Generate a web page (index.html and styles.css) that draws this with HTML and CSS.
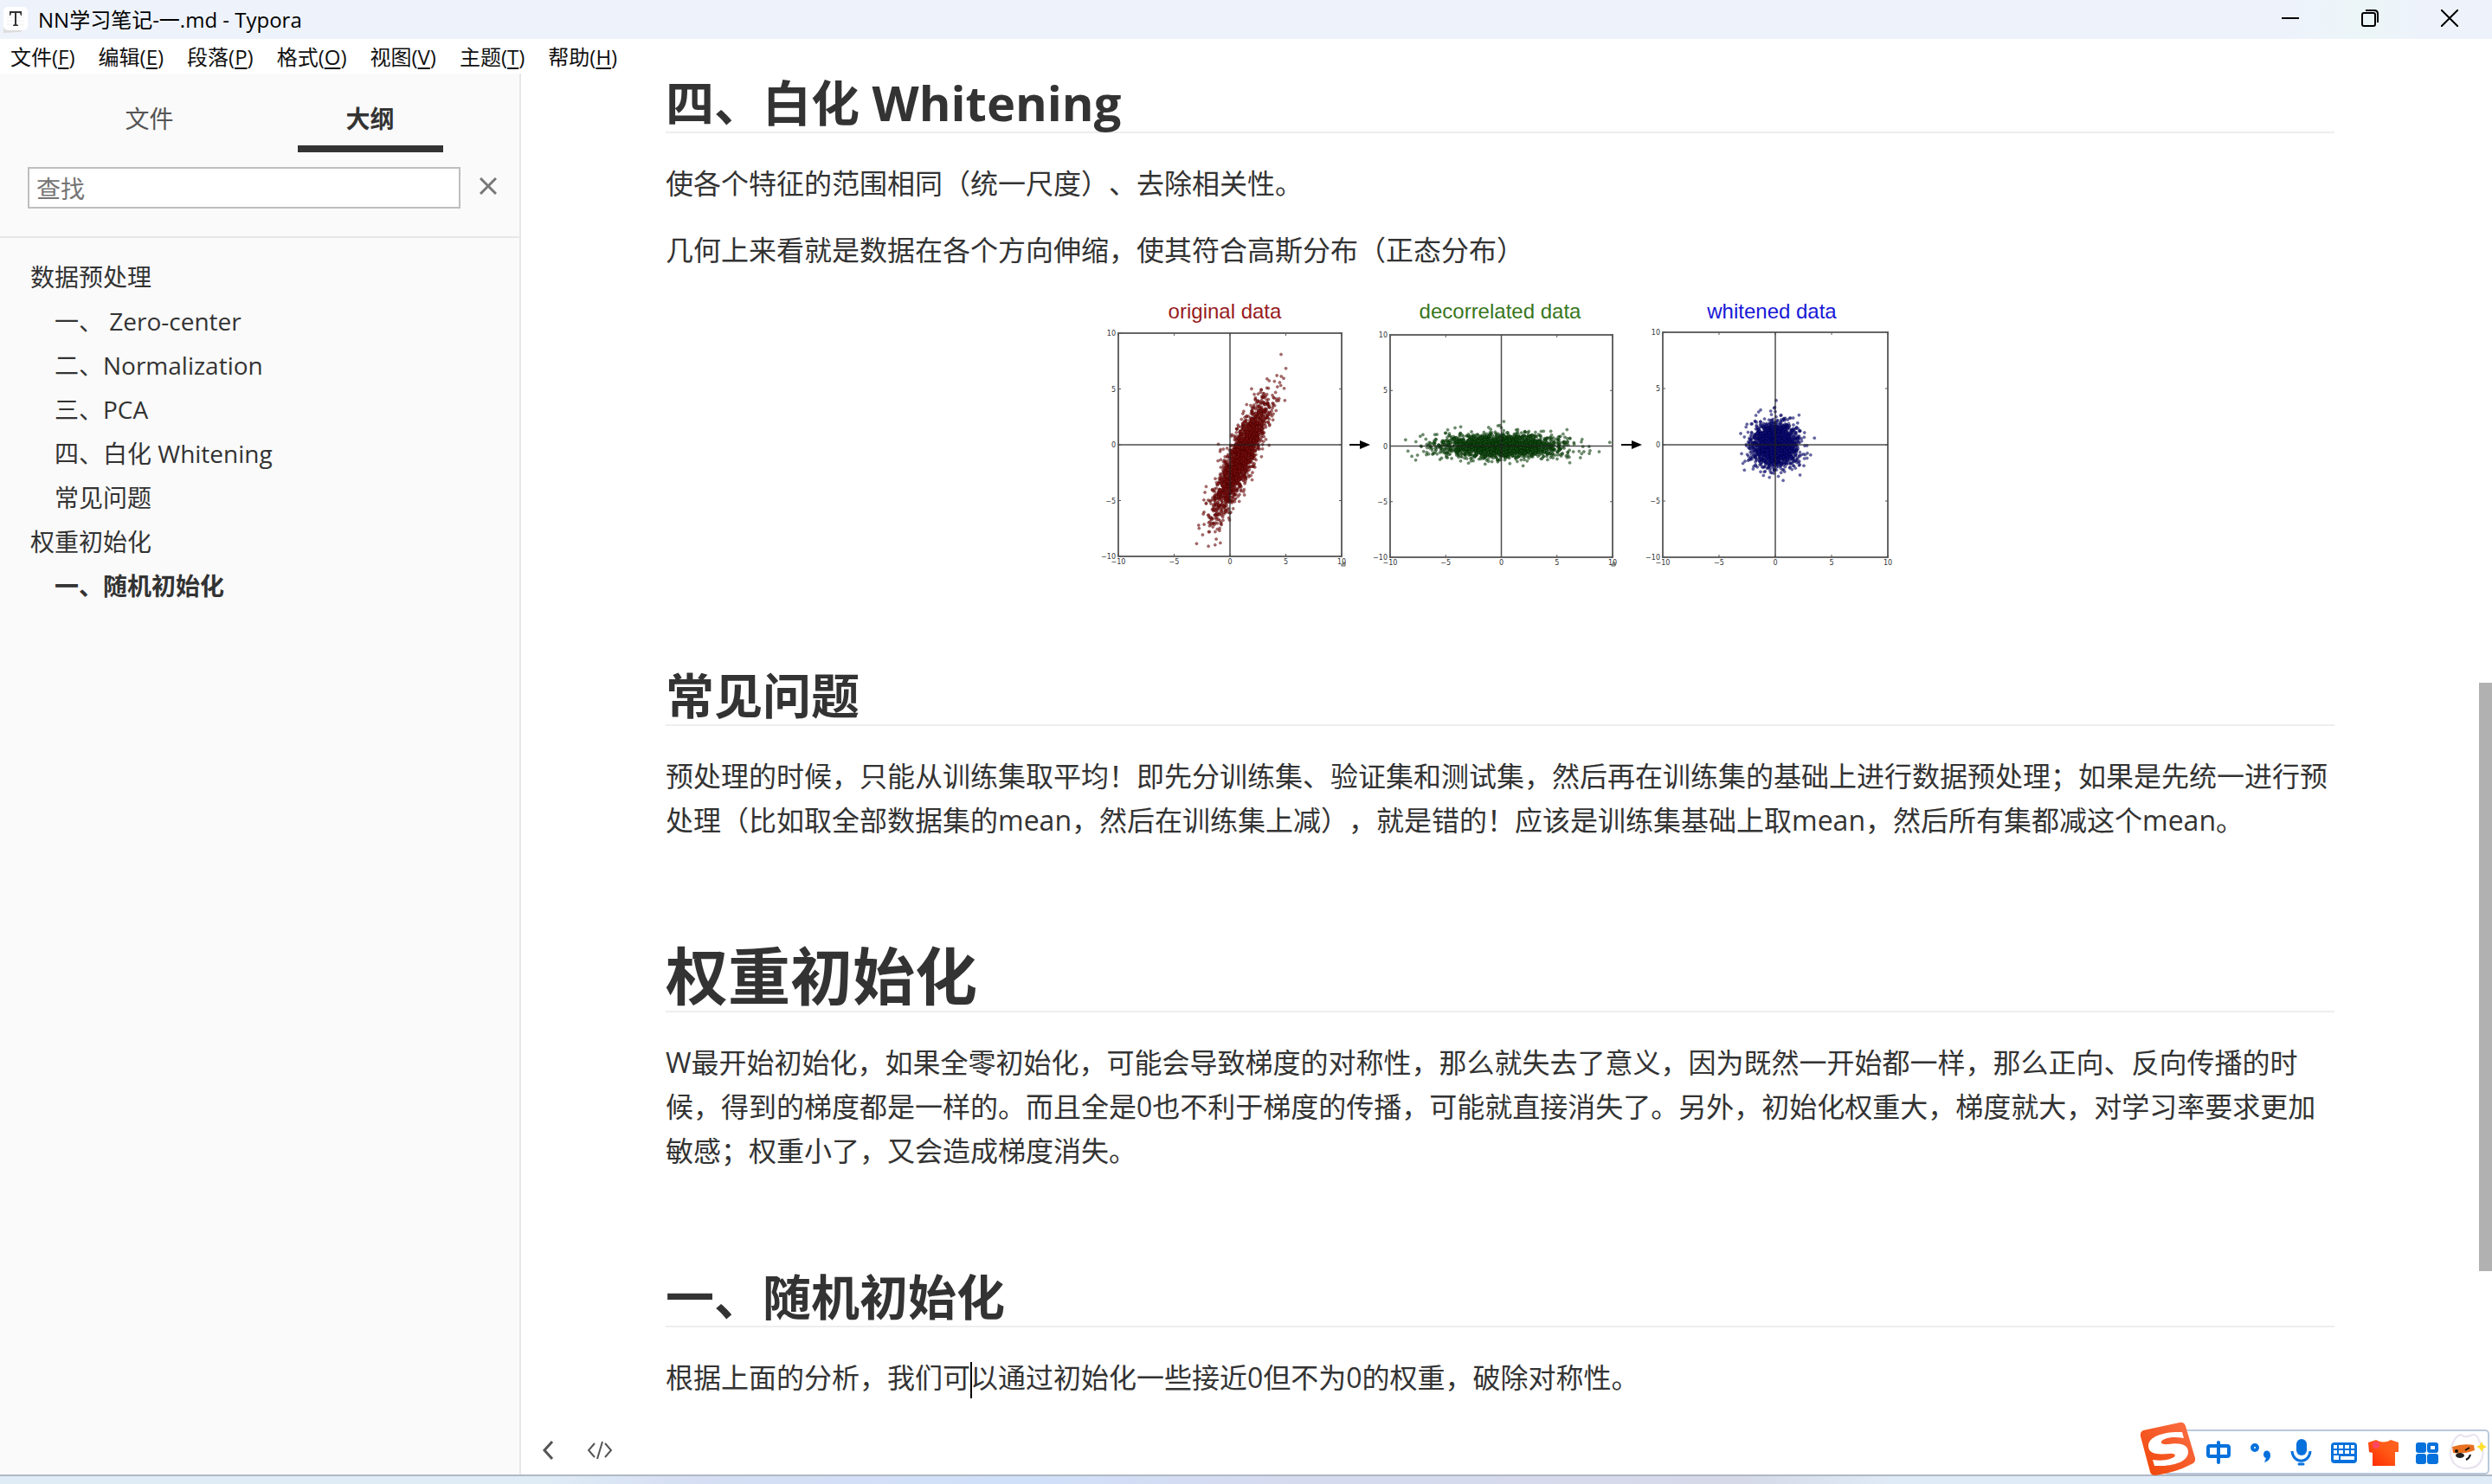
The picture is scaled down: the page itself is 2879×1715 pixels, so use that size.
FILE: index.html
```html
<!DOCTYPE html>
<html lang="zh-CN">
<head>
<meta charset="utf-8">
<title>NN学习笔记-一.md - Typora</title>
<link rel="stylesheet" href="styles.css">
</head>
<body>
<div class="window">
  <header class="titlebar">
    <svg class="app-icon" viewBox="0 0 30 32" aria-hidden="true">
      <path d="M1 7 3 3 28 2 28 26 20 30 1 31Z" fill="#dcdcdc"/>
      <rect x="1" y="1" width="28" height="27" rx="5" fill="#fff"/>
      <path d="M5 9H25M5 13H25M5 17H25M5 21H25" stroke="#eee"/>
      <path d="M8 6H22V11H21L20 8H16V21L18 22V23H12V22L14 21V8H10L9 11H8Z" fill="#333"/>
    </svg>
    <h1 class="window-title">NN学习笔记-一.md - Typora</h1>
    <div class="window-controls">
      <button class="window-button" type="button" aria-label="最小化"><svg width="20" height="20" viewBox="0 0 20 20"><path d="M0 10H20" stroke="#000" stroke-width="2"/></svg></button>
      <button class="window-button" type="button" aria-label="还原"><svg width="20" height="20" viewBox="0 0 20 20" fill="none" stroke="#000" stroke-width="2"><rect x="1" y="4" width="15" height="15" rx="2"/><path d="M5 1H15Q19 1 19 5V15"/></svg></button>
      <button class="window-button" type="button" aria-label="关闭"><svg width="20" height="20" viewBox="0 0 20 20"><path d="M0 0 20 20M20 0 0 20" stroke="#000" stroke-width="2"/></svg></button>
    </div>
  </header>

  <nav class="menubar" aria-label="菜单">
    <button class="menu" type="button">文件(<u>F</u>)</button>
    <button class="menu" type="button">编辑(<u>E</u>)</button>
    <button class="menu" type="button">段落(<u>P</u>)</button>
    <button class="menu" type="button">格式(<u>O</u>)</button>
    <button class="menu" type="button">视图(<u>V</u>)</button>
    <button class="menu" type="button">主题(<u>T</u>)</button>
    <button class="menu" type="button">帮助(<u>H</u>)</button>
  </nav>

  <div class="workspace">
    <aside class="sidebar">
      <div class="tabs">
        <button class="tab" type="button">文件</button>
        <button class="tab tab-active" type="button">大纲</button>
      </div>
      <div class="search">
        <input class="search-input" type="text" placeholder="查找" aria-label="查找">
        <button class="search-close" type="button" aria-label="清除"><svg width="20" height="20" viewBox="0 0 20 20"><path d="M1 1 19 19M19 1 1 19" stroke="#777" stroke-width="3"/></svg></button>
      </div>
      <ul class="outline">
        <li><a href="#data">数据预处理</a>
          <ul>
            <li><a href="#zero">一、 Zero-center</a></li>
            <li><a href="#norm">二、Normalization</a></li>
            <li><a href="#pca">三、PCA</a></li>
            <li><a href="#whitening">四、白化 Whitening</a></li>
            <li><a href="#faq">常见问题</a></li>
          </ul>
        </li>
        <li><a href="#weights">权重初始化</a>
          <ul>
            <li><a class="current" href="#random">一、随机初始化</a></li>
          </ul>
        </li>
      </ul>
    </aside>

    <main class="editor">
      <article class="document">
        <h2 id="whitening">四、白化 Whitening</h2>
        <p>使各个特征的范围相同（统一尺度）、去除相关性。</p>
        <p>几何上来看就是数据在各个方向伸缩，使其符合高斯分布（正态分布）</p>
        <figure class="figure">
          <svg class="plots" viewBox="1273 340 920 325" role="img" aria-label="original data, decorrelated data, whitened data">
            <g class="plot-title" text-anchor="middle">
              <text x="1415" y="368" fill="#981b1e">original data</text>
              <text x="1733" y="368" fill="#38761d">decorrelated data</text>
              <text x="2047" y="368" fill="#1717d6">whitened data</text>
            </g>
            <g id="plots"></g>
            <g fill="#000" stroke="none">
              <path d="M1559 513H1571V509L1583 514 1571 519V515H1559Z"/>
              <path d="M1873 513H1885V509L1897 514 1885 519V515H1873Z"/>
            </g>
          </svg>
        </figure>
        <h2 id="faq">常见问题</h2>
        <p>预处理的时候，只能从训练集取平均！即先分训练集、验证集和测试集，然后再在训练集的基础上进行数据预处理；如果是先统一进行预处理（比如取全部数据集的mean，然后在训练集上减），就是错的！应该是训练集基础上取mean，然后所有集都减这个mean。</p>
        <h1 id="weights">权重初始化</h1>
        <p>W最开始初始化，如果全零初始化，可能会导致梯度的对称性，那么就失去了意义，因为既然一开始都一样，那么正向、反向传播的时候，得到的梯度都是一样的。而且全是0也不利于梯度的传播，可能就直接消失了。另外，初始化权重大，梯度就大，对学习率要求更加敏感；权重小了，又会造成梯度消失。</p>
        <h2 id="random" class="after-long">一、随机初始化</h2>
        <p>根据上面的分析，我们可<span class="caret"></span>以通过初始化一些接近0但不为0的权重，破除对称性。</p>
      </article>
      <footer class="statusbar">
        <button class="status-button" type="button" aria-label="隐藏侧边栏"><svg width="14" height="22" viewBox="0 0 14 22"><path d="M12 1 3 11 12 21" fill="none" stroke="#555" stroke-width="3"/></svg></button>
        <button class="status-button" type="button" aria-label="源代码模式"><svg width="30" height="22" viewBox="0 0 30 22"><path d="M9 3 2 11 9 19M21 3 28 11 21 19M18 1 12 21" fill="none" stroke="#555" stroke-width="2"/></svg></button>
      </footer>
      <div class="scroll-thumb"></div>
    </main>
  </div>
  <div class="desktop-edge"></div>

  <div class="ime" role="toolbar" aria-label="输入法">
    <svg class="ime-strip" width="407" height="64" viewBox="2472 1642 407 64" aria-hidden="true">
      <defs>
        <linearGradient id="logo" x1="0" y1="1" x2="1" y2="0"><stop offset="0" stop-color="#f04405"/><stop offset="1" stop-color="#fb7048"/></linearGradient>
        <linearGradient id="shirt" x1="0" y1="1" x2="1" y2="0"><stop offset="0" stop-color="#ff2500"/><stop offset=".6" stop-color="#ff5a16"/><stop offset="1" stop-color="#ff6422"/></linearGradient>
      </defs>
      <rect x="2500" y="1653" width="375" height="50" rx="4" fill="#fff" stroke="#b9c9dc" stroke-width="2"/>
      <path d="M2476 1653 2518 1644Q2523 1643 2525 1648L2536 1685Q2537 1690 2532 1692 2513 1702 2490 1705 2485 1705 2484 1701L2473 1660Q2472 1655 2476 1653Z" fill="url(#logo)"/>
      <path d="M2521 1655C2500 1654 2482 1660 2482 1671C2482 1681 2494 1681 2506 1680C2515 1679 2515 1684 2507 1686C2501 1688 2494 1688 2487 1687L2489 1694C2509 1695 2528 1690 2528 1678C2528 1669 2518 1667 2505 1669C2496 1670 2494 1666 2501 1663C2508 1660 2516 1661 2523 1662Z" fill="#fff"/>
      <g fill="none" stroke="#0671dc" stroke-width="4">
        <rect x="2551" y="1671" width="24" height="12" rx="2"/><path d="M2563 1667V1690" stroke-linecap="round"/>
        <circle cx="2605" cy="1673" r="3"/>
        <path d="M2648 1677C2649 1692 2668 1692 2669 1677" stroke-width="3"/><path d="M2656 1692H2661" stroke-linecap="round" stroke-width="3"/>
      </g>
      <g fill="#0671dc">
        <path d="M2615 1681C2615 1675 2623 1675 2623 1682C2623 1686 2620 1689 2616 1690L2618 1685Q2615 1684 2615 1681Z"/>
        <rect x="2653" y="1663" width="12" height="19" rx="6"/>
        <rect x="2693" y="1667" width="30" height="24" rx="4"/>
        <rect x="2791" y="1667" width="12" height="12" rx="3"/><rect x="2804" y="1667" width="13" height="12" rx="3"/>
        <rect x="2791" y="1680" width="12" height="12" rx="3"/><rect x="2804" y="1680" width="13" height="12" rx="3"/>
      </g>
      <g fill="#fff">
        <path d="M2696 1670h4v4h-4zM2702 1670h5v4h-5zM2709 1670h5v4h-5zM2716 1670h4v4h-4zM2696 1676h4v4h-4zM2702 1676h5v4h-5zM2709 1676h5v4h-5zM2716 1676h4v4h-4zM2696 1682h6v5h-6zM2704 1683h16v4h-16z"/>
        <rect x="2808" y="1671" width="5" height="4"/>
      </g>
      <path d="M2736 1667 2745 1664Q2754 1669 2762 1664L2771 1667V1678H2767V1694H2741V1679L2737 1678Z" fill="url(#shirt)"/>
      <circle cx="2745" cy="1670" r="4" fill="#ff4664"/>
      <path d="M2831 1678C2832 1668 2837 1659 2843 1658Q2848 1662 2854 1659C2861 1656 2863 1661 2864 1665C2873 1676 2869 1697 2850 1697C2837 1697 2831 1689 2831 1678Z" fill="#fff" stroke="#e8e2ee" stroke-width="2"/>
      <path d="M2833 1672Q2845 1668 2858 1670L2859 1676Q2846 1681 2834 1679Z" fill="#e87020"/>
      <ellipse cx="2842" cy="1682" rx="5" ry="3" fill="#222"/><circle cx="2838" cy="1677" r="2" fill="#111"/>
      <path d="M2848 1676 2853 1673M2849 1687Q2853 1685 2854 1681" fill="none" stroke="#111" stroke-width="2"/>
      <path d="M2867 1666 2869 1670 2873 1672 2869 1674 2867 1678 2865 1674 2861 1672 2865 1670Z" fill="#ffe02e"/>
    </svg>
  </div>
</div>
<script src="plots.js"></script>
</body>
</html>
```
FILE: styles.css
```css
* { box-sizing: border-box; }

body {
  margin: 0;
  font-family: "Open Sans", "Noto Sans CJK SC", sans-serif;
  color: #333;
  background: #fff;
  text-spacing-trim: space-all;
}

button {
  padding: 0;
  border: 0;
  background: none;
  font: inherit;
  color: inherit;
}

svg { display: block; }

.window {
  position: relative;
  display: flex;
  flex-direction: column;
  height: 100vh;
  overflow: hidden;
}

/* Title bar and menus */
.titlebar {
  display: flex;
  align-items: center;
  flex: none;
  height: 45px;
  padding: 0 3px;
  background: linear-gradient(90deg, #eef3fb 92%, #ebf5f7 95%, #eef3fb 97%);
  color: #000;
}

.app-icon { width: 30px; height: 32px; }

.window-title {
  margin: 0 auto 0 11px;
  font-size: 24px;
  font-weight: 400;
  line-height: 44px;
}

.window-controls { display: flex; align-self: flex-start; }

.window-button {
  display: grid;
  place-items: center;
  width: 92px;
  height: 42px;
}

.menubar {
  display: flex;
  flex: none;
  gap: 27px;
  height: 40px;
  padding-left: 12px;
  color: #111;
}

.menu {
  font-size: 24px;
  line-height: 42px;
  white-space: nowrap;
}

.menu u { text-underline-offset: 3px; }

/* Sidebar */
.workspace {
  display: flex;
  flex: 1;
  min-height: 0;
}

.sidebar {
  flex: none;
  width: 602px;
  border-right: 2px solid #e7e7e7;
  background: #fafafa;
  font-size: 28px;
}

.tabs {
  display: flex;
  justify-content: space-around;
  padding: 13px 45px 0;
}

.tab {
  width: 168px;
  height: 78px;
  padding-top: 6px;
  border-bottom: 8px solid transparent;
  color: #555;
}

.tab-active {
  border-color: #333;
  color: #333;
  font-weight: 700;
}

.search {
  display: flex;
  align-items: center;
  gap: 22px;
  padding: 17px 26px 32px 32px;
  border-bottom: 2px solid #e7e7e7;
}

.search-input {
  flex: 1;
  min-width: 0;
  height: 48px;
  padding: 2px 8px 0;
  border: 2px solid #bebebe;
  background: #fff;
  font: inherit;
}

.search-input::placeholder { color: #757575; }
.search-close { padding-bottom: 4px; }

.outline, .outline ul {
  margin: 0;
  padding: 0;
  list-style: none;
}

.outline { padding: 20px 35px; line-height: 51px; }
.outline ul { padding-left: 28px; }
.outline a { color: inherit; text-decoration: none; }
.outline .current { font-weight: 700; }

/* Document */
.editor {
  position: relative;
  flex: 1;
  min-width: 0;
}

.document {
  padding: 0 182px 0 167px;
  font-size: 32px;
  line-height: 51px;
}

.document h1, .document h2 {
  border-bottom: 2px solid #eee;
  font-weight: 700;
}

.document h1 {
  margin: 113px 0 32px;
  font-size: 72px;
  line-height: 82px;
}

.document h2 {
  margin: 0 0 32px;
  font-size: 56px;
  line-height: 67px;
}

.document .after-long { margin-top: 110px; }
.document p { margin: 0 0 26px; }

.document .figure { margin: 0 0 105px; }
.plots { width: 920px; max-width: 100%; margin: 0 auto; overflow: visible; }
.plot-title { font: 24px "Liberation Sans", sans-serif; }
.tick-label { font: 8px "DejaVu Sans", sans-serif; fill: #333; }

.caret {
  display: inline-block;
  width: 2px;
  height: 42px;
  margin-right: -2px;
  background: #000;
  vertical-align: middle;
}

.statusbar {
  position: absolute;
  bottom: 16px;
  left: 24px;
  display: flex;
  gap: 38px;
}

.status-button { height: 24px; }

.scroll-thumb {
  position: absolute;
  top: 43.5%;
  right: 0;
  width: 15px;
  height: 42%;
  background: #b1b1b1;
}

.desktop-edge {
  flex: none;
  height: 11px;
  border-top: 2px solid #b0b8c4;
  background: linear-gradient(90deg, #dfebf5 22%, #d5def3 28%, #d0e0f9 41%, #d6daef 52%, #d5d9e8 70%, #dfebf6 76%);
}

.ime {
  position: absolute;
  right: 0;
  bottom: 9px;
}
```
FILE: plots.js
```js
// Draws one Gaussian sample three ways: original, decorrelated and whitened.
const NS = "http://www.w3.org/2000/svg";
const root = document.getElementById("plots");

let seed = 20;
function random() {
  seed = (seed * 1664525 + 1013904223) % 4294967296;
  return (seed + 1) / 4294967297;
}
function normal() {
  return Math.sqrt(-2 * Math.log(random())) * Math.cos(2 * Math.PI * random());
}

function add(name, attributes, text) {
  const node = document.createElementNS(NS, name);
  for (const key in attributes) node.setAttribute(key, attributes[key]);
  if (text) node.textContent = text;
  root.appendChild(node);
}

const sample = [];
for (let i = 0; i < 2000; i++) sample.push([normal(), normal()]);

const plots = [
  { x: 1292, y: 385, w: 258, h: 258, fill: "#8c1414", edge: "#460000",
    map: ([a, b]) => [1 + 1.12 * a - 0.54 * b, -1.1 + 2.6 * a + 0.24 * b] },
  { x: 1606, y: 387, w: 257, h: 257, fill: "#1c5a1c", edge: "#002800",
    map: ([a, b]) => [2.8 * a, 0.56 * b] },
  { x: 1921, y: 384, w: 260, h: 260, fill: "#14148c", edge: "#000046",
    map: ([a, b]) => [a, b] },
];

for (const p of plots) {
  const px = (v) => p.x + ((v + 10) / 20) * p.w;
  const py = (v) => p.y + ((10 - v) / 20) * p.h;
  for (const point of sample) {
    const [x, y] = p.map(point);
    add("circle", { cx: px(x), cy: py(y), r: 1.5, fill: p.fill,
      stroke: p.edge, "stroke-width": 0.7, opacity: 0.65 });
  }
  add("rect", { x: p.x, y: p.y, width: p.w, height: p.h, fill: "none", stroke: "#666", "stroke-width": 2 });
  add("path", { d: `M${px(0)} ${p.y}V${p.y + p.h}M${p.x} ${py(0)}H${p.x + p.w}`, stroke: "#222", "stroke-width": 1.5, opacity: 0.8 });
  for (const v of [-10, -5, 0, 5, 10]) {
    const label = String(v).replace("-", "−");
    add("path", { d: `M${px(v)} ${p.y}v3M${px(v)} ${p.y + p.h}v-3M${p.x} ${py(v)}h3M${p.x + p.w} ${py(v)}h-3`, stroke: "#555" });
    add("text", { x: px(v), y: p.y + p.h + 9, "text-anchor": "middle", class: "tick-label" }, label);
    add("text", { x: p.x - 3, y: py(v) + 3, "text-anchor": "end", class: "tick-label" }, label);
  }
}

// Small marks left beside the last tick of the first two plots.
for (const x of [1551, 1863]) {
  add("path", { d: `M${x} 650h3v4h-4v-2h3`, fill: "none", stroke: "#555" });
}
```
